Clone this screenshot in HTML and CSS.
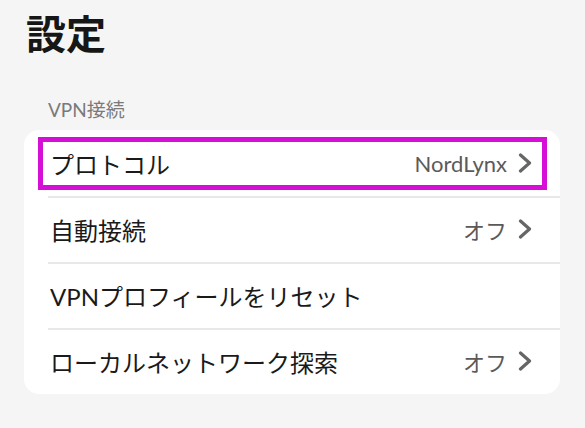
FILE: index.html
```html
<!DOCTYPE html>
<html lang="ja">
<head>
<meta charset="utf-8">
<link rel="stylesheet" href="styles.css">
</head>
<body>
<div class="page">
  <h1 class="title">設定</h1>
  <div class="section-label">VPN接続</div>
  <div class="card">
    <div class="row row-highlight">
      <span class="row-label">プロトコル</span>
      <span class="row-value">NordLynx<svg class="chev" viewBox="0 0 14 20"><path d="M2.5 2 L11.5 10 L2.5 18" /></svg></span>
    </div>
    <div class="row">
      <span class="row-label">自動接続</span>
      <span class="row-value">オフ<svg class="chev" viewBox="0 0 14 20"><path d="M2.5 2 L11.5 10 L2.5 18" /></svg></span>
    </div>
    <div class="row">
      <span class="row-label">VPNプロフィールをリセット</span>
    </div>
    <div class="row">
      <span class="row-label">ローカルネットワーク探索</span>
      <span class="row-value">オフ<svg class="chev" viewBox="0 0 14 20"><path d="M2.5 2 L11.5 10 L2.5 18" /></svg></span>
    </div>
  </div>
</div>
</body>
</html>
```

FILE: styles.css
```css
html, body {
  margin: 0;
  padding: 0;
  background: #f5f5f5;
}
body {
  font-family: Lato, "Noto Sans CJK JP", sans-serif;
  color: #1e1e1e;
}
.page {
  width: 585px;
  height: 428px;
  padding: 4px 25px 0 24px;
  box-sizing: border-box;
  overflow: hidden;
}
.title {
  margin: 0 0 0 2px;
  font-family: "Noto Sans CJK JP", sans-serif;
  font-size: 40px;
  font-weight: 700;
  line-height: 56px;
  color: #161616;
}
.section-label {
  margin: 38px 0 0 24px;
  font-family: Lato, "Noto Sans CJK JP", sans-serif;
  font-size: 19px;
  font-weight: 400;
  line-height: 24px;
  color: #7a7a7a;
}
.card {
  margin-top: 8px;
  background: #ffffff;
  border-radius: 15px;
  overflow: hidden;
}
.row {
  position: relative;
  height: 66px;
  display: flex;
  align-items: center;
  justify-content: space-between;
  padding: 0 28px 0 26px;
  box-sizing: border-box;
}
.row + .row::before {
  content: "";
  position: absolute;
  left: 24px;
  right: 0;
  top: 0;
  height: 2px;
  background: #e8e8e8;
}
.row-highlight::after {
  content: "";
  position: absolute;
  left: 14px;
  right: 13px;
  top: 7px;
  bottom: 6px;
  border: 5px solid #d60fd6;
  pointer-events: none;
}
.row-label {
  font-size: 24px;
  font-weight: 400;
  color: #1a1a1a;
  white-space: nowrap;
}
.row-value {
  display: flex;
  align-items: center;
  gap: 11px;
  font-size: 22px;
  font-weight: 400;
  color: #5a5a5a;
}
.chev {
  width: 14px;
  height: 20px;
}
.chev path {
  fill: none;
  stroke: #666666;
  stroke-width: 3.2;
  stroke-linecap: round;
  stroke-linejoin: round;
}
```
